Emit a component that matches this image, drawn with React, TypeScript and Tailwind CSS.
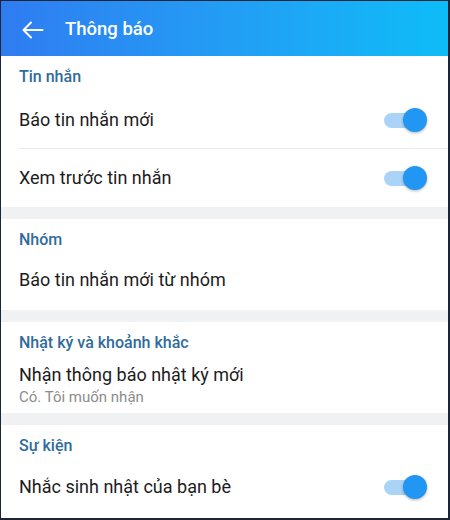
import React from 'react';

function Toggle() {
  return (
    <div className="relative w-[43px] h-[24px] shrink-0">
      <div className="absolute left-0 top-[5px] w-[38px] h-[15px] rounded-full bg-[#a9d4f8]" />
      <div className="absolute right-0 top-0 w-[24px] h-[24px] rounded-full bg-[#2196f3] shadow-[0_1px_3px_rgba(0,0,0,0.3)]" />
    </div>
  );
}

function SectionTitle({ children }: { children: React.ReactNode }) {
  return (
    <div className="pl-[18px] pt-[11px] text-[16px] leading-[20px] font-medium text-[#2f6c9c]">{children}</div>
  );
}

function Row({ label, toggle, className }: { label: string; toggle?: boolean; className: string }) {
  return (
    <div className={`flex items-center justify-between pl-[18px] pr-[21px] ${className}`}>
      <span className="text-[18px] leading-[24px] text-[#1c1c1c]">{label}</span>
      {toggle && <Toggle />}
    </div>
  );
}

function Gap() {
  return <div className="h-[12px] bg-[#f0f1f3]" />;
}

export default function App() {
  return (
    <div
      className="w-[450px] h-[520px] overflow-hidden bg-white border-t border-l border-r-2 border-b-2 border-[#1b2535] flex flex-col"
      style={{ fontFamily: 'Roboto, "Noto Sans", sans-serif' }}
    >
      {/* toolbar */}
      <div className="h-[55px] shrink-0 flex items-center pt-[2px] bg-gradient-to-r from-[#2f7cf1] to-[#0cbcf7]">
        <svg width="22" height="18" viewBox="0 0 22 18" className="ml-[21px]" fill="none" stroke="white" strokeWidth="2" strokeLinecap="round" strokeLinejoin="round">
          <path d="M9 1.5 L1.5 9 L9 16.5 M1.5 9 H20.5" />
        </svg>
        <span className="ml-[21px] text-[18.5px] font-medium text-white">Thông báo</span>
      </div>

      <div className="h-[36px] shrink-0">
        <SectionTitle>Tin nhắn</SectionTitle>
      </div>
      <Row label="Báo tin nhắn mới" toggle className="h-[56px] shrink-0" />
      <div className="ml-[18px] h-px bg-[#e9e9e9] shrink-0" />
      <Row label="Xem trước tin nhắn" toggle className="h-[58px] shrink-0" />

      <Gap />

      <div className="h-[31px] shrink-0">
        <SectionTitle>Nhóm</SectionTitle>
      </div>
      <Row label="Báo tin nhắn mới từ nhóm" className="h-[60px] shrink-0" />

      <Gap />

      <div className="h-[31px] shrink-0">
        <SectionTitle>Nhật ký và khoảnh khắc</SectionTitle>
      </div>
      <div className="h-[60px] shrink-0 pl-[18px] pt-[11px]">
        <div className="text-[18px] leading-[22px] text-[#1c1c1c]">Nhận thông báo nhật ký mới</div>
        <div className="mt-[2px] text-[15px] leading-[18px] text-[#8c8c8c]">Có. Tôi muốn nhận</div>
      </div>

      <Gap />

      <div className="h-[31px] shrink-0">
        <SectionTitle>Sự kiện</SectionTitle>
      </div>
      <Row label="Nhắc sinh nhật của bạn bè" toggle className="h-[62px] shrink-0" />
    </div>
  );
}
